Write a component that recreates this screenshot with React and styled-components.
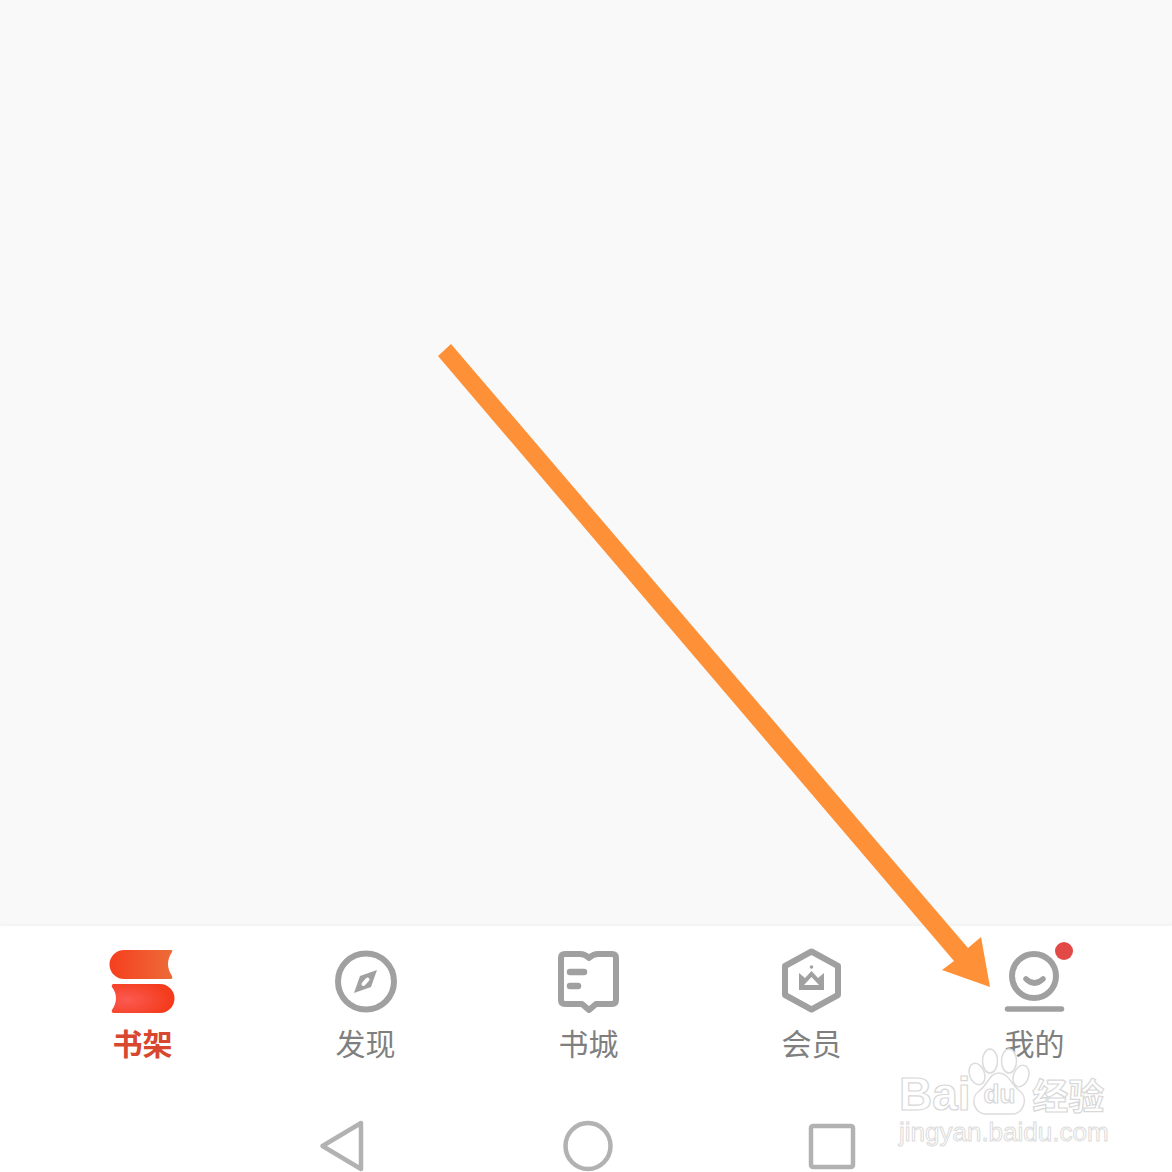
import styled, { createGlobalStyle } from "styled-components"

const GlobalStyle = createGlobalStyle`
    html, body {
        margin: 0;
        padding: 0;
        background: #ffffff;
        font-family: "Noto Sans CJK SC", "Noto Sans", sans-serif;
    }
`

function ShelfIcon() {
    return (
        <svg width="70" height="70" viewBox="0 0 70 70">
            <defs>
                <linearGradient id="shelfTop" x1="0" y1="0" x2="1" y2="0">
                    <stop offset="0" stopColor="#f63f1e" />
                    <stop offset="1" stopColor="#ec6c38" />
                </linearGradient>
                <radialGradient id="shelfBottom" cx="0.25" cy="0.55" r="0.7">
                    <stop offset="0" stopColor="#fb5a52" />
                    <stop offset="1" stopColor="#f43b1c" />
                </radialGradient>
            </defs>
            <path d="M16 4 H63 Q65 4 64 6 Q56 18 64 30 Q65 33 63 33 H16 A14.5 14.5 0 0 1 16 4 Z" fill="url(#shelfTop)" />
            <path d="M6 38 H52 A14.5 14.5 0 0 1 52 67 H6 Q3 67 4 64 Q12 52 4 41 Q3 38 6 38 Z" fill="url(#shelfBottom)" />
        </svg>
    )
}

function CompassIcon() {
    return (
        <svg width="70" height="70" viewBox="0 0 70 70">
            <circle cx="35" cy="35.5" r="28" fill="none" stroke="#a0a0a0" strokeWidth="6" />
            <path d="M46 24 L40 41 L23 47 L29 30 Z" fill="#a0a0a0" />
            <path d="M32.5 38 L36.5 33.5" stroke="#ffffff" strokeWidth="4" strokeLinecap="round" />
        </svg>
    )
}

function BookIcon() {
    return (
        <svg width="70" height="70" viewBox="0 0 70 70">
            <path
                d="M11 8 H26 Q31 8 35 12 Q39 8 44 8 H58 Q62 8 62 12 V54 Q62 58 58 58 H42 L35 64 L28 58 H11 Q7 58 7 54 V12 Q7 8 11 8 Z"
                fill="none"
                stroke="#a0a0a0"
                strokeWidth="6"
                strokeLinejoin="round"
            />
            <path d="M16 26 H30 M16 40 H24" stroke="#a0a0a0" strokeWidth="6.5" strokeLinecap="round" />
        </svg>
    )
}

function VipIcon() {
    return (
        <svg width="70" height="70" viewBox="0 0 70 70">
            <path
                d="M34.5 5.5 L61 20 V49 L34.5 63.5 L8 49 V20 Z"
                fill="none"
                stroke="#a0a0a0"
                strokeWidth="6"
                strokeLinejoin="round"
            />
            <path d="M22 27 L28 32 L34.5 25 L41 32 L47 27 V44 H22 Z" fill="#a0a0a0" />
            <path d="M27 39 L34.5 31 L42 39 Z" fill="#ffffff" />
            <circle cx="34.5" cy="21" r="1.8" fill="#a0a0a0" />
        </svg>
    )
}

function MineIcon() {
    return (
        <svg width="70" height="70" viewBox="0 0 70 70">
            <circle cx="34" cy="30" r="22" fill="none" stroke="#a0a0a0" strokeWidth="6" />
            <path d="M26 33 Q34.5 41 43 33" fill="none" stroke="#a0a0a0" strokeWidth="5.5" strokeLinecap="round" />
            <path d="M7.5 63 H61.5" stroke="#a0a0a0" strokeWidth="5.5" strokeLinecap="round" />
        </svg>
    )
}

const tabs = [
    { label: "书架", Icon: ShelfIcon, active: true },
    { label: "发现", Icon: CompassIcon },
    { label: "书城", Icon: BookIcon },
    { label: "会员", Icon: VipIcon },
    { label: "我的", Icon: MineIcon, dot: true },
]

export default function App() {
    return (
        <>
            <GlobalStyle />
            <Screen>
                <Content />
                <TabBar>
                    {tabs.map(({ label, Icon, active, dot }) => (
                        <Tab key={label}>
                            <IconBox>
                                <Icon />
                                {dot && <Dot />}
                            </IconBox>
                            <TabLabel $active={active}>{label}</TabLabel>
                        </Tab>
                    ))}
                </TabBar>
                <NavBar>
                    <svg width="60" height="56" viewBox="0 0 60 56">
                        <path d="M10.5 30 L49 7 V53 Z" fill="none" stroke="#b2b2b2" strokeWidth="4.5" strokeLinejoin="round" />
                    </svg>
                    <svg width="60" height="56" viewBox="0 0 60 56">
                        <ellipse cx="31" cy="30" rx="22.5" ry="23" fill="none" stroke="#b2b2b2" strokeWidth="4.5" />
                    </svg>
                    <svg width="60" height="56" viewBox="0 0 60 56">
                        <rect x="9" y="10" width="42" height="41" rx="2" fill="none" stroke="#b2b2b2" strokeWidth="4.5" />
                    </svg>
                </NavBar>
                <Arrow viewBox="0 0 1172 1172">
                    <path
                        d="M438 356 L451 344 L968 948 L981 937 L990 987 L942 970 L954 961 Z"
                        fill="#fe9138"
                    />
                </Arrow>
                <Watermark>
                    <Paw viewBox="0 0 70 70" width="70" height="70">
                        <g fill="#ffffff" stroke="#dcdcdc" strokeWidth="1.5">
                            <ellipse cx="23" cy="14" rx="7.5" ry="12" />
                            <ellipse cx="42" cy="14" rx="7.5" ry="12" />
                            <ellipse cx="10" cy="27" rx="7.5" ry="11" transform="rotate(-20 10 27)" />
                            <ellipse cx="54" cy="29" rx="7.5" ry="11" transform="rotate(20 54 29)" />
                            <path d="M32 26 C42 26 44 38 53 44 C62 52 56 68 44 67 L20 67 C8 68 2 52 12 44 C21 38 22 26 32 26 Z" />
                        </g>
                    </Paw>
                    <BrandRow>
                        <BrandLatin>Bai</BrandLatin>
                        <BrandInner>du</BrandInner>
                        <BrandCjk>经验</BrandCjk>
                    </BrandRow>
                    <BrandUrl>jingyan.baidu.com</BrandUrl>
                </Watermark>
            </Screen>
        </>
    )
}

const Screen = styled.div`
    position: relative;
    display: flex;
    flex-direction: column;
    width: 1172px;
    height: 1172px;
    overflow: hidden;
    background: #ffffff;
`

const Content = styled.main`
    flex: none;
    height: 926px;
    background: #f9f9f9;
    box-shadow: inset 0 -5px 5px -4px rgba(0, 0, 0, 0.04);
`

const TabBar = styled.nav`
    display: grid;
    grid-template-columns: repeat(5, 223px);
    padding: 20px 0 0 31px;
`

const Tab = styled.div`
    display: flex;
    flex-direction: column;
    align-items: center;
`

const IconBox = styled.div`
    position: relative;
    width: 70px;
    height: 70px;

    svg {
        display: block;
    }
`

const Dot = styled.span`
    position: absolute;
    top: -4px;
    right: -3px;
    width: 18px;
    height: 18px;
    border-radius: 50%;
    background: #e24a47;
`

const TabLabel = styled.span`
    margin-top: 8px;
    font-size: 30px;
    line-height: 36px;
    font-weight: ${(props) => (props.$active ? 700 : 400)};
    color: ${(props) => (props.$active ? "#d8472f" : "#7f7f7f")};
`

const NavBar = styled.div`
    display: flex;
    justify-content: center;
    gap: 185px;
    margin-top: 56px;
    padding-left: 2px;

    svg {
        display: block;
    }
`

const Arrow = styled.svg`
    position: absolute;
    top: 0;
    left: 0;
    width: 1172px;
    height: 1172px;
    pointer-events: none;
`

const Watermark = styled.div`
    position: absolute;
    top: 1047px;
    left: 899px;
    width: 215px;
    height: 100px;
    pointer-events: none;
`

const Paw = styled.svg`
    position: absolute;
    top: 0;
    left: 68px;
`

const BrandRow = styled.div`
    position: absolute;
    top: 22px;
    left: 0;
    display: flex;
    align-items: center;
    height: 50px;
    color: #ffffff;
    -webkit-text-stroke: 1.2px #d8d8d8;
`

const BrandLatin = styled.span`
    font-family: "Liberation Sans", sans-serif;
    font-size: 46px;
    font-weight: 700;
`

const BrandInner = styled.span`
    margin-left: 13px;
    font-family: "Liberation Sans", sans-serif;
    font-size: 26px;
    font-weight: 700;
`

const BrandCjk = styled.span`
    margin-left: 17px;
    font-size: 36px;
    font-weight: 700;
`

const BrandUrl = styled.div`
    position: absolute;
    top: 70px;
    left: 0;
    font-family: "Liberation Sans", sans-serif;
    font-size: 26px;
    line-height: 30px;
    white-space: nowrap;
    color: #ffffff;
    -webkit-text-stroke: 1px #dcdcdc;
`
